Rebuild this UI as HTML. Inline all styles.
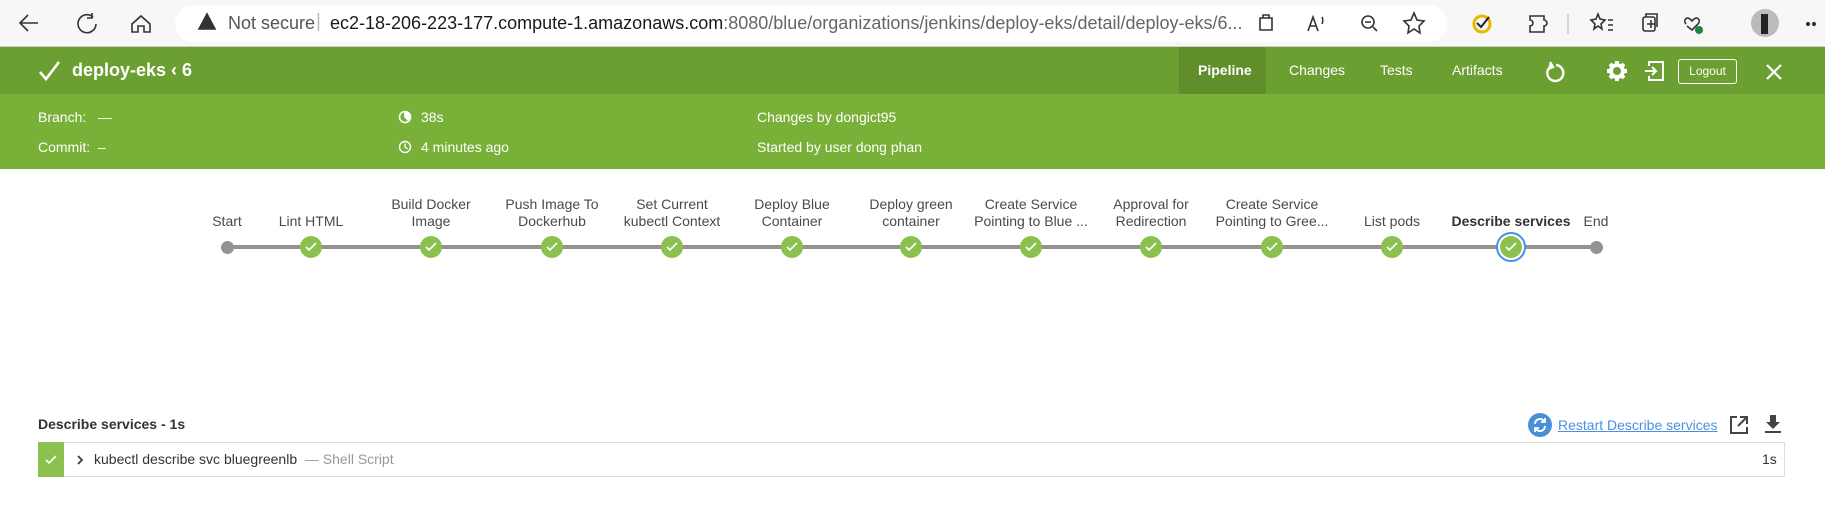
<!DOCTYPE html>
<html><head><meta charset="utf-8"><style>
*{margin:0;padding:0;box-sizing:border-box}
body{width:1825px;height:518px;overflow:hidden;background:#fff;font-family:"Liberation Sans",sans-serif;position:relative}
.a{position:absolute;white-space:nowrap}
#bar{position:absolute;left:0;top:0;width:1825px;height:47px;background:#f7f7f7;border-bottom:1px solid #d0d0d0}
#pill{position:absolute;left:175px;top:5px;width:1272px;height:37px;background:#fff;border-radius:19px}
#h1{position:absolute;left:0;top:47px;width:1825px;height:47px;background:#6c9f32}
#h2{position:absolute;left:0;top:94px;width:1825px;height:75px;background:#79b038}
.w{color:#fff}
.lbl{font-size:14px;color:#4a4a4a;text-align:center;line-height:17px;transform:translateX(-50%)}
.node{position:absolute;width:22px;height:22px;border-radius:50%;background:#8cc04f;top:236px}
.node svg{position:absolute;left:5px;top:6px}
</style></head><body>
<div id="bar"></div>
<div id="pill"></div>
<svg class="a" style="left:0;top:0" width="1825" height="47" fill="none" stroke="#333" stroke-width="1.6">
<path d="M38 23H21M28 15l-8 8 8 8"/>
<path d="M93 17a9 9 0 1 0 3 7M92 13v5h-5"/>
<path d="M132 24l9-8 9 8v8h-6v-6h-6v6h-6z"/>
<path d="M207 14l8 15h-16z" fill="#333"/>
<path d="M1260 18h12v12h-12zM1263 18v-3h6v3"/>
<path d="M1308 31l5-14 5 14M1310 26h6M1322 17c1 2 1 5 0 7"/>
<circle cx="1368" cy="22" r="6"/><path d="M1365 22h6M1373 27l4 4"/>
<path d="M1414 13l3 7 7 1-5 5 1 7-6-4-6 4 1-7-5-5 7-1z"/>
<circle cx="1482" cy="24" r="8" stroke="#e6b800" stroke-width="3"/><path d="M1477 23l4 4 8-10" stroke="#222" stroke-width="2"/>
<path d="M1536 16h8v4a3 3 0 1 1 0 6v6h-14v-6a3 3 0 1 0 0-6v-4h6"/>
<path d="M1568 14v20" stroke="#ccc"/>
<path d="M1598 14l2 5 5 1-4 4 1 5-4-3-4 3 1-5-4-4 5-1zM1608 20h5M1608 25h5M1608 30h5"/>
<rect x="1643" y="17" width="12" height="14" rx="2"/><path d="M1647 24h8M1651 20v8M1646 17v-3h11v13"/>
<path d="M1687 26l5 4 6-6c3-3 0-8-4-5l-2 2-2-2c-4-3-7 2-4 5"/><circle cx="1699" cy="30" r="4" fill="#1a8a3a" stroke="none"/>
<circle cx="1765" cy="23" r="14" fill="#bbb" stroke="none"/><rect x="1761" y="14" width="7" height="20" fill="#222" stroke="none"/>
<circle cx="1808" cy="24" r="1.3" fill="#333"/><circle cx="1814" cy="24" r="1.3" fill="#333"/>
</svg>
<div class="a" style="left:228px;top:13px;font-size:18px;color:#555">Not secure</div>
<div class="a" style="left:316px;top:11px;font-size:19px;color:#bbb">|</div>
<div class="a" style="left:330px;top:13px;font-size:18px;color:#1a1a1a">ec2-18-206-223-177.compute-1.amazonaws.com<span style="color:#666">:8080/blue/organizations/jenkins/deploy-eks/detail/deploy-eks/6...</span></div>

<div id="h1"></div><div id="h2"></div>
<div class="a" style="left:1179px;top:47px;width:87px;height:47px;background:#5f8e2b"></div>
<svg class="a" style="left:38px;top:59px" width="24" height="24" fill="none" stroke="#fff" stroke-width="2.6"><path d="M2 13l6 7L21 3"/></svg>
<div class="a w" style="left:72px;top:60px;font-size:18px;font-weight:bold">deploy-eks &lsaquo; 6</div>
<div class="a w" style="left:1198px;top:62px;font-size:14px;font-weight:bold">Pipeline</div>
<div class="a w" style="left:1289px;top:62px;font-size:14px">Changes</div>
<div class="a w" style="left:1380px;top:62px;font-size:14px">Tests</div>
<div class="a w" style="left:1452px;top:62px;font-size:14px">Artifacts</div>
<svg class="a" style="left:1540px;top:58px" width="30" height="30" fill="none" stroke="#fff" stroke-width="2.4"><path d="M10 9a8 8 0 1 0 6 -2"/><path d="M10 4l3 5-5 2" fill="#fff"/></svg>
<svg class="a" style="left:1606px;top:60px" width="22" height="22"><circle cx="11" cy="11" r="6" fill="none" stroke="#fff" stroke-width="4"/><g stroke="#fff" stroke-width="4"><path d="M11 1v5M11 16v5M1 11h5M16 11h5M4 4l3 3M15 15l3 3M4 18l3-3M15 7l3-3"/></g></svg>
<svg class="a" style="left:1643px;top:59px" width="24" height="24" fill="none" stroke="#fff" stroke-width="2"><path d="M6 7V3h14v18H6v-4M2 12h11M9 8l4 4-4 4"/></svg>
<div class="a" style="left:1678px;top:59px;width:59px;height:25px;border:1px solid #fff;border-radius:3px;color:#fff;font-size:12px;text-align:center;line-height:23px">Logout</div>
<svg class="a" style="left:1765px;top:63px" width="18" height="18" stroke="#fff" stroke-width="2.2"><path d="M2 2l14 14M16 2L2 16"/></svg>

<div class="a w" style="left:38px;top:109px;font-size:14px">Branch: &nbsp;&nbsp;—</div>
<div class="a w" style="left:38px;top:139px;font-size:14px">Commit: &nbsp;–</div>
<svg class="a" style="left:398px;top:110px" width="14" height="14" fill="none" stroke="#fff" stroke-width="1.6"><circle cx="7" cy="7" r="5.5"/><path d="M7 7V2.5A4.5 4.5 0 0 1 10 10z" fill="#fff"/></svg>
<svg class="a" style="left:398px;top:140px" width="14" height="14" fill="none" stroke="#fff" stroke-width="1.4"><circle cx="7" cy="7" r="5.5"/><path d="M7 3.5V7l2.5 2"/></svg>
<div class="a w" style="left:421px;top:109px;font-size:14px">38s</div>
<div class="a w" style="left:421px;top:139px;font-size:14px">4 minutes ago</div>
<div class="a w" style="left:757px;top:109px;font-size:14px">Changes by dongict95</div>
<div class="a w" style="left:757px;top:139px;font-size:14px">Started by user dong phan</div>

<div class="a" style="left:227px;top:245px;width:1369px;height:4px;background:#949393"></div>
<div class="a" style="left:221px;top:241px;width:13px;height:13px;border-radius:50%;background:#949393"></div>
<div class="a" style="left:1590px;top:241px;width:13px;height:13px;border-radius:50%;background:#949393"></div>
<div class="a" style="left:1496px;top:232px;width:30px;height:30px;border-radius:50%;border:2px solid #4a90e2;background:#fff"></div>

<div class="a lbl" style="left:227px;top:213px">Start</div>
<div class="a lbl" style="left:311px;top:213px">Lint HTML</div>
<div class="a lbl" style="left:431px;top:196px">Build Docker<br>Image</div>
<div class="a lbl" style="left:552px;top:196px">Push Image To<br>Dockerhub</div>
<div class="a lbl" style="left:672px;top:196px">Set Current<br>kubectl Context</div>
<div class="a lbl" style="left:792px;top:196px">Deploy Blue<br>Container</div>
<div class="a lbl" style="left:911px;top:196px">Deploy green<br>container</div>
<div class="a lbl" style="left:1031px;top:196px">Create Service<br>Pointing to Blue ...</div>
<div class="a lbl" style="left:1151px;top:196px">Approval for<br>Redirection</div>
<div class="a lbl" style="left:1272px;top:196px">Create Service<br>Pointing to Gree...</div>
<div class="a lbl" style="left:1392px;top:213px">List pods</div>
<div class="a lbl" style="left:1511px;top:213px;font-weight:bold;color:#333">Describe services</div>
<div class="a lbl" style="left:1596px;top:213px">End</div>

<div class="node" style="left:300px"><svg width="12" height="10" fill="none" stroke="#fff" stroke-width="1.6"><path d="M1 5l3 3 7-7"/></svg></div>
<div class="node" style="left:420px"><svg width="12" height="10" fill="none" stroke="#fff" stroke-width="1.6"><path d="M1 5l3 3 7-7"/></svg></div>
<div class="node" style="left:541px"><svg width="12" height="10" fill="none" stroke="#fff" stroke-width="1.6"><path d="M1 5l3 3 7-7"/></svg></div>
<div class="node" style="left:661px"><svg width="12" height="10" fill="none" stroke="#fff" stroke-width="1.6"><path d="M1 5l3 3 7-7"/></svg></div>
<div class="node" style="left:781px"><svg width="12" height="10" fill="none" stroke="#fff" stroke-width="1.6"><path d="M1 5l3 3 7-7"/></svg></div>
<div class="node" style="left:900px"><svg width="12" height="10" fill="none" stroke="#fff" stroke-width="1.6"><path d="M1 5l3 3 7-7"/></svg></div>
<div class="node" style="left:1020px"><svg width="12" height="10" fill="none" stroke="#fff" stroke-width="1.6"><path d="M1 5l3 3 7-7"/></svg></div>
<div class="node" style="left:1140px"><svg width="12" height="10" fill="none" stroke="#fff" stroke-width="1.6"><path d="M1 5l3 3 7-7"/></svg></div>
<div class="node" style="left:1261px"><svg width="12" height="10" fill="none" stroke="#fff" stroke-width="1.6"><path d="M1 5l3 3 7-7"/></svg></div>
<div class="node" style="left:1381px"><svg width="12" height="10" fill="none" stroke="#fff" stroke-width="1.6"><path d="M1 5l3 3 7-7"/></svg></div>
<div class="node" style="left:1500px"><svg width="12" height="10" fill="none" stroke="#fff" stroke-width="1.6"><path d="M1 5l3 3 7-7"/></svg></div>

<div class="a" style="left:38px;top:416px;font-size:14px;font-weight:bold;color:#333">Describe services - 1s</div>
<svg class="a" style="left:1528px;top:413px" width="24" height="24"><circle cx="12" cy="12" r="12" fill="#4a90d9"/><path d="M7 11a5 5 0 0 1 9-3M17 13a5 5 0 0 1-9 3" fill="none" stroke="#fff" stroke-width="2"/><path d="M17 5v4h-4M7 19v-4h4" fill="none" stroke="#fff" stroke-width="1.8"/></svg>
<div class="a" style="left:1558px;top:417px;font-size:14px;color:#4a90e2;text-decoration:underline">Restart Describe services</div>
<svg class="a" style="left:1729px;top:415px" width="20" height="20" fill="none" stroke="#444" stroke-width="2"><path d="M8 2H2v16h16v-6M11 2h7v7M18 2l-9 9"/></svg>
<svg class="a" style="left:1765px;top:414px" width="16" height="20" fill="#444"><path d="M5 1h6v7h4l-7 7-7-7h4z"/><rect x="0" y="17" width="16" height="2"/></svg>

<div class="a" style="left:38px;top:442px;width:1747px;height:35px;border:1px solid #ddd;background:#fff"></div>
<div class="a" style="left:38px;top:442px;width:26px;height:35px;background:#8cc04f"></div>
<svg class="a" style="left:45px;top:455px" width="13" height="10" fill="none" stroke="#fff" stroke-width="1.6"><path d="M1 5l3 3 7-7"/></svg>
<svg class="a" style="left:76px;top:454px" width="8" height="12" fill="none" stroke="#333" stroke-width="1.6"><path d="M2 2l4 4-4 4"/></svg>
<div class="a" style="left:94px;top:451px;font-size:14px;color:#333">kubectl describe svc bluegreenlb <span style="color:#999">&nbsp;— Shell Script</span></div>
<div class="a" style="left:1762px;top:451px;font-size:14px;color:#333">1s</div>
</body></html>
